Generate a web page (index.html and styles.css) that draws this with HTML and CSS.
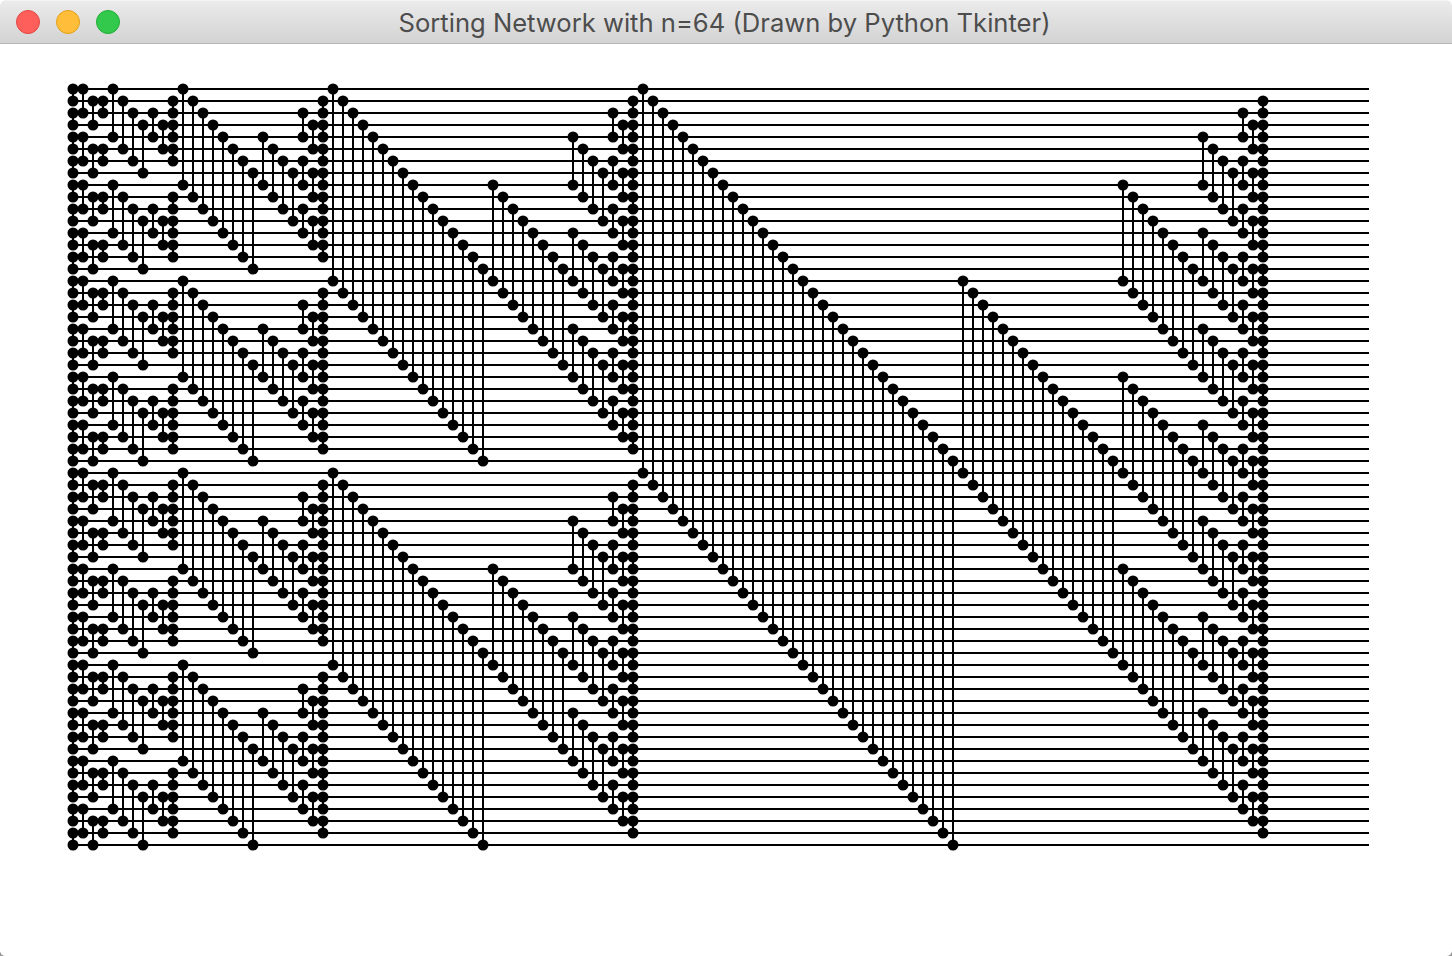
FILE: index.html
```html
<!DOCTYPE html>
<html lang="en">
<head>
<meta charset="utf-8">
<title>Sorting Network with n=64 (Drawn by Python Tkinter)</title>
<link rel="stylesheet" href="styles.css">
</head>
<body>
<div class="window">
  <header class="titlebar">
    <div class="lights">
      <span class="light light-close"></span>
      <span class="light light-min"></span>
      <span class="light light-max"></span>
    </div>
    <h1 class="title">Sorting Network with n=64 (Drawn by Python Tkinter)</h1>
  </header>
  <main class="canvas">
    <svg id="network" class="network" width="1452" height="912" viewBox="0 44 1452 912" xmlns="http://www.w3.org/2000/svg"></svg>
  </main>
</div>
<script src="network.js"></script>
</body>
</html>
```

FILE: styles.css
```css
* { box-sizing: border-box; }
html, body { margin: 0; height: 100%; }
body {
  overflow: hidden;
  background: linear-gradient(#ffffff 0 50%, #9a9a9a 50% 100%);
}
.window {
  width: 1452px;
  height: 956px;
  display: flex;
  flex-direction: column;
  border-radius: 6px;
  overflow: hidden;
  background: #fff;
}
.titlebar {
  position: relative;
  flex: 0 0 44px;
  display: flex;
  align-items: center;
  justify-content: center;
  padding: 1px 3px 0 0;
  background: linear-gradient(#ebebeb, #d3d3d3);
  border-top: 1px solid #f4f4f4;
  border-bottom: 1px solid #b8b8b8;
}
.lights {
  position: absolute;
  left: 16px;
  top: 9px;
  display: flex;
  gap: 16px;
}
.light {
  width: 24px;
  height: 24px;
  border-radius: 50%;
  border: 1px solid;
}
.light-close { background: #ff5f5b; border-color: #e2463f; }
.light-min { background: #ffbd3a; border-color: #e1a116; }
.light-max { background: #32c94c; border-color: #1fae34; }
.title {
  margin: 0;
  font: 400 25.6px/1 "Inter", "Liberation Sans", sans-serif;
  color: #4d4d4d;
  white-space: nowrap;
}
.canvas { flex: 1; min-height: 0; background: #fff; }
.network { display: block; }
.wire, .link { stroke: #000; stroke-width: 2; shape-rendering: crispEdges; }
.dot { fill: #000; }
```

FILE: network.js
```js
(function () {
  var NS = "http://www.w3.org/2000/svg";
  var svg = document.getElementById("network");
  var n = 64, X0 = 73, Y0 = 89, DX = 10, DY = 12, XEND = 1369, R = 5.5;

  function add(tag, cls, attrs) {
    var el = document.createElementNS(NS, tag);
    el.setAttribute("class", cls);
    for (var k in attrs) el.setAttribute(k, attrs[k]);
    svg.appendChild(el);
  }

  // Batcher's odd-even merge sort; each i of each pass takes one column.
  var comps = [], col = 0;
  for (var p = 1; p < n; p *= 2) {
    for (var k = p; k >= 1; k = Math.floor(k / 2)) {
      for (var i = 0; i < k; i++) {
        for (var j = k % p; j + k < n; j += 2 * k) {
          var a = i + j, b = i + j + k;
          if (b < n && Math.floor(a / (2 * p)) === Math.floor(b / (2 * p))) {
            comps.push([col, a, b]);
          }
        }
        col++;
      }
    }
  }

  for (var w = 0; w < n; w++) {
    add("line", "wire", { x1: X0, y1: Y0 + w * DY, x2: XEND, y2: Y0 + w * DY });
  }
  comps.forEach(function (c) {
    var x = X0 + c[0] * DX;
    add("line", "link", { x1: x, y1: Y0 + c[1] * DY, x2: x, y2: Y0 + c[2] * DY });
  });
  comps.forEach(function (c) {
    var x = X0 + c[0] * DX;
    add("circle", "dot", { cx: x, cy: Y0 + c[1] * DY, r: R });
    add("circle", "dot", { cx: x, cy: Y0 + c[2] * DY, r: R });
  });
})();
```
